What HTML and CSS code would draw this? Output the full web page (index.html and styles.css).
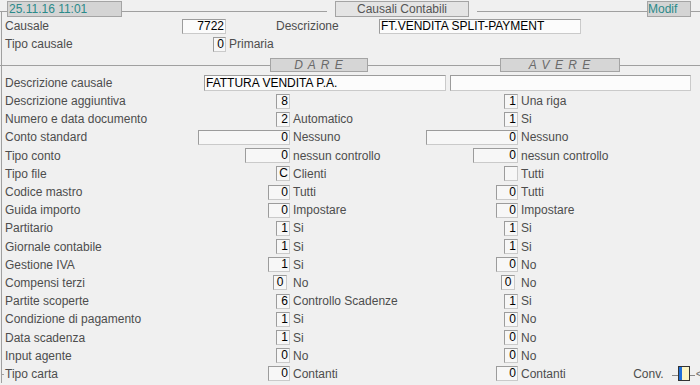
FILE: index.html
```html
<!DOCTYPE html>
<html lang="it">
<head>
<meta charset="UTF-8">
<title>Causali Contabili</title>
<link rel="stylesheet" href="styles.css">
</head>
<body>
<div class="screen">
    <div class="titlebar">
        <span class="rule lead"></span>
        <span class="tab date">25.11.16 11:01</span>
        <span class="rule r1"></span>
        <span class="tab title">Causali Contabili</span>
        <span class="rule r2"></span>
        <span class="tab mode">Modif</span>
        <span class="rule fill"></span>
    </div>

    <div class="frame">
        <div class="head-row">
            <span class="lbl">Causale</span>
            <span class="fld w-code">7722</span>
            <span></span>
            <span class="lbl">Descrizione</span>
            <span class="fld w-desc left">FT.VENDITA SPLIT-PAYMENT</span>
        </div>
        <div class="head-row">
            <span class="lbl">Tipo causale</span>
            <span class="fld w1">0</span>
            <span class="txt">Primaria</span>
        </div>

        <div class="section">
            <span class="rule s1"></span>
            <span class="band dare">D A R E</span>
            <span class="rule s2"></span>
            <span class="band avere">A V E R E</span>
            <span class="rule fill"></span>
        </div>

        <div class="desc-row">
            <span class="lbl">Descrizione causale</span>
            <span class="fld w-long left">FATTURA VENDITA P.A.</span>
            <span class="fld w-long2 left"></span>
        </div>

        <div class="row">
            <span class="lbl">Descrizione aggiuntiva</span>
            <span class="fld w1">8</span><span class="txt"></span>
            <span class="fld w1">1</span><span class="txt">Una riga</span>
        </div>
        <div class="row">
            <span class="lbl">Numero e data documento</span>
            <span class="fld w1">2</span><span class="txt">Automatico</span>
            <span class="fld w1">1</span><span class="txt">Si</span>
        </div>
        <div class="row">
            <span class="lbl">Conto standard</span>
            <span class="fld w4">0</span><span class="txt">Nessuno</span>
            <span class="fld w4">0</span><span class="txt">Nessuno</span>
        </div>
        <div class="row">
            <span class="lbl">Tipo conto</span>
            <span class="fld w3">0</span><span class="txt">nessun controllo</span>
            <span class="fld w3">0</span><span class="txt">nessun controllo</span>
        </div>
        <div class="row">
            <span class="lbl">Tipo file</span>
            <span class="fld w1">C</span><span class="txt">Clienti</span>
            <span class="fld w1"></span><span class="txt">Tutti</span>
        </div>
        <div class="row">
            <span class="lbl">Codice mastro</span>
            <span class="fld w2">0</span><span class="txt">Tutti</span>
            <span class="fld w2">0</span><span class="txt">Tutti</span>
        </div>
        <div class="row">
            <span class="lbl">Guida importo</span>
            <span class="fld w2">0</span><span class="txt">Impostare</span>
            <span class="fld w2">0</span><span class="txt">Impostare</span>
        </div>
        <div class="row">
            <span class="lbl">Partitario</span>
            <span class="fld w1">1</span><span class="txt">Si</span>
            <span class="fld w1">1</span><span class="txt">Si</span>
        </div>
        <div class="row">
            <span class="lbl">Giornale contabile</span>
            <span class="fld w1">1</span><span class="txt">Si</span>
            <span class="fld w1">1</span><span class="txt">Si</span>
        </div>
        <div class="row">
            <span class="lbl">Gestione IVA</span>
            <span class="fld w2">1</span><span class="txt">Si</span>
            <span class="fld w2">0</span><span class="txt">No</span>
        </div>
        <div class="row">
            <span class="lbl">Compensi terzi</span>
            <span class="fld w1 mid">0</span><span class="txt">No</span>
            <span class="fld w1 mid">0</span><span class="txt">No</span>
        </div>
        <div class="row">
            <span class="lbl">Partite scoperte</span>
            <span class="fld w1">6</span><span class="txt">Controllo Scadenze</span>
            <span class="fld w1">1</span><span class="txt">Si</span>
        </div>
        <div class="row">
            <span class="lbl">Condizione di pagamento</span>
            <span class="fld w1">1</span><span class="txt">Si</span>
            <span class="fld w1">0</span><span class="txt">No</span>
        </div>
        <div class="row">
            <span class="lbl">Data scadenza</span>
            <span class="fld w1">1</span><span class="txt">Si</span>
            <span class="fld w1">0</span><span class="txt">No</span>
        </div>
        <div class="row">
            <span class="lbl">Input agente</span>
            <span class="fld w1">0</span><span class="txt">No</span>
            <span class="fld w1">0</span><span class="txt">No</span>
        </div>
        <div class="row last">
            <span class="lbl"><span class="tick"></span>Tipo carta</span>
            <span class="fld w2">0</span><span class="txt">Contanti</span>
            <span class="fld w2">0</span>
            <span class="txt end">
                Contanti
                <span class="conv">
                    Conv.
                    <span class="link"></span>
                    <span class="switch"><span class="switch-bar"></span></span>
                    <span class="link short"></span>
                    <span class="arrow">&lt;.</span>
                </span>
            </span>
        </div>
    </div>
</div>
</body>
</html>
```

FILE: styles.css
```css
body {
    margin: 0;
    background-color: #f0f0f0;
    font-family: "Liberation Sans", Arial, sans-serif;
    font-size: 12px;
    color: #4d4d4d;
}

.screen {
    width: 700px;
    height: 385px;
    overflow: hidden;
}

/* top title bar */
.titlebar {
    display: flex;
    align-items: flex-start;
    height: 16px;
    padding-top: 1px;
}

.rule {
    height: 1px;
    margin-top: 10px;
    background-color: #a0a0a0;
}

.rule.lead { width: 7px; }
.rule.r1 { width: 205px; margin-right: 8px; }
.rule.r2 { width: 170px; margin-left: 8px; }
.rule.fill { flex: 1; }

.tab {
    box-sizing: border-box;
    height: 16px;
    line-height: 14px;
    border: 1px solid #a4a4a4;
    background-color: #d4d4d4;
    white-space: nowrap;
}

.tab.date {
    width: 115px;
    padding-left: 1px;
    color: #2b8a8a;
}

.tab.title {
    width: 134px;
    text-align: center;
    background-color: #e4e4e4;
    color: #555;
}

.tab.mode {
    width: 44px;
    color: #2b8a8a;
}

/* main frame */
.frame {
    margin-top: -6px;
    margin-left: 1px;
    padding-top: 6px;
    border-left: 1px solid #a0a0a0;
}

.lbl {
    padding-left: 3px;
    white-space: nowrap;
}

.txt {
    padding-left: 3px;
    white-space: nowrap;
}

.fld {
    box-sizing: border-box;
    height: 15px;
    line-height: 13px;
    padding: 0 1px;
    border: 1px solid;
    border-color: #9c9c9c #cacaca #cacaca #9c9c9c;
    background-color: #f7f7f7;
    color: #000;
    text-align: right;
    white-space: nowrap;
    overflow: hidden;
}

.fld.left { text-align: left; background-color: #fcfcfc; }
.fld.mid { text-align: center; margin-right: 3px; }

.w1 { width: 14px; }
.w2 { width: 22px; }
.w3 { width: 45px; }
.w4 { width: 92px; }
.w-code { width: 44px; background-color: #fbfbfb; }
.w-desc { width: 202px; }

.head-row {
    display: grid;
    grid-template-columns: 180px 44px 47px 106px 202px;
    align-items: center;
    height: 18px;
}

.head-row .fld { justify-self: end; }
.head-row .w1 { width: 13px; }

/* D A R E / A V E R E band */
.section {
    display: flex;
    align-items: flex-start;
    height: 21px;
    margin-left: -2px;
}

.section .rule { margin-top: 12px; }
.rule.s1 { width: 270px; }
.rule.s2 { width: 132px; }

.band {
    box-sizing: border-box;
    height: 14px;
    margin-top: 5px;
    line-height: 12px;
    border: 1px solid #a4a4a4;
    background-color: #d6d6d6;
    color: #6a6a6a;
    font-style: italic;
    letter-spacing: 1px;
    text-align: center;
}

.band.dare { width: 98px; }
.band.avere { width: 120px; }

.desc-row {
    display: flex;
    align-items: center;
    height: 18px;
}

.desc-row .lbl { width: 199px; }
.desc-row .fld { height: 16px; line-height: 14px; }
.w-long { width: 242px; margin-right: 4px; }
.w-long2 { width: 241px; }

/* field rows */
.row {
    display: grid;
    grid-template-columns: 194px 94px 134px 94px 1fr;
    align-items: center;
    height: 18.2px;
}

.row .fld { justify-self: end; }

.row.last { margin-bottom: -9px; }

.tick {
    display: inline-block;
    width: 3px;
    height: 1px;
    margin-left: -4px;
    margin-right: 1px;
    vertical-align: middle;
    background-color: #a0a0a0;
}

.txt.end {
    display: flex;
    align-items: center;
}

.conv {
    display: flex;
    align-items: center;
    margin-left: auto;
    margin-right: -6px;
}

.link {
    width: 6px;
    height: 1px;
    margin-left: 8px;
    margin-top: 4px;
    background-color: #888;
}

.link.short {
    width: 5px;
    margin-left: 0;
}

.switch {
    box-sizing: border-box;
    display: flex;
    width: 12px;
    height: 15px;
    border: 1px solid #333;
    background-color: #fbf5c6;
}

.switch-bar {
    width: 3px;
    background-color: #1f6fd8;
}

.arrow {
    margin-left: 1px;
    color: #777;
}
```
